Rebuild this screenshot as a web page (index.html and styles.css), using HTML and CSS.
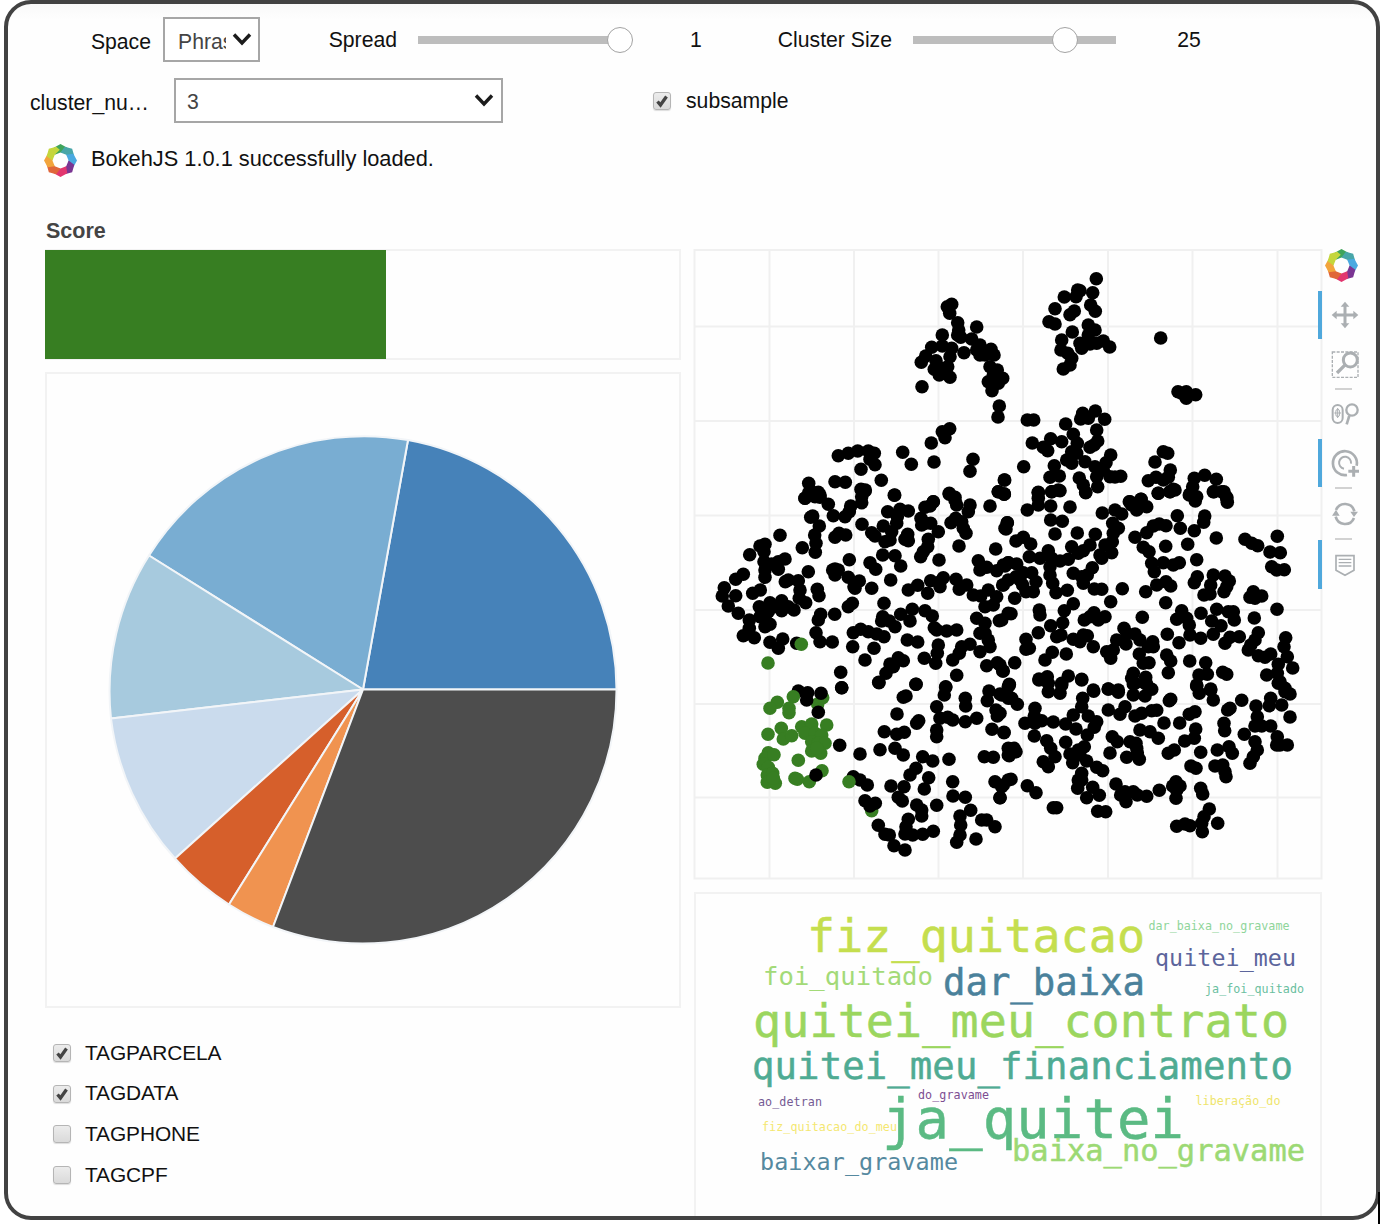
FILE: index.html
```html
<!DOCTYPE html>
<html lang="en">
<head>
<meta charset="utf-8">
<title>Cluster explorer</title>
<link rel="stylesheet" href="styles.css">
</head>
<body>
<svg class="defs" width="0" height="0" aria-hidden="true">
  <defs>
    <symbol id="bokeh" viewBox="-49 -49 98 98">
      <path fill="#3fa45b" d="M-20-38L0-49L20-38L21-24L0-24L-17-17Z"/>
      <path fill="#48a6a8" transform="rotate(45)" d="M-20-38L0-49L20-38L21-24L0-24L-17-17Z"/>
      <path fill="#4aa9e0" transform="rotate(90)" d="M-20-38L0-49L20-38L21-24L0-24L-17-17Z"/>
      <path fill="#7a3592" transform="rotate(135)" d="M-20-38L0-49L20-38L21-24L0-24L-17-17Z"/>
      <path fill="#e2366f" transform="rotate(180)" d="M-20-38L0-49L20-38L21-24L0-24L-17-17Z"/>
      <path fill="#e0663a" transform="rotate(225)" d="M-20-38L0-49L20-38L21-24L0-24L-17-17Z"/>
      <path fill="#f2a43c" transform="rotate(270)" d="M-20-38L0-49L20-38L21-24L0-24L-17-17Z"/>
      <path fill="#c4d63c" transform="rotate(315)" d="M-20-38L0-49L20-38L21-24L0-24L-17-17Z"/>
    </symbol>
    <symbol id="chevron" viewBox="0 0 20 14"><path d="M2 2.500L10 11L18 2.500" fill="none" stroke="#1c1c1c" stroke-width="3.400"/></symbol>
    <symbol id="check" viewBox="0 0 18 18"><path d="M4.500 9.500L7.500 13L13.500 4.500" fill="none" stroke="#444" stroke-width="3.300"/></symbol>
  </defs>
</svg>
<main class="frame">
  <div class="controls">
    <label class="label">Space</label>
    <div class="select small"><span>Phrase</span><svg width="20" height="14"><use href="#chevron"/></svg></div>
    <label class="label wide">Spread</label>
    <div class="slider"><i class="thumb" style="left:202px"></i></div>
    <output>1</output>
    <label class="label wide">Cluster Size</label>
    <div class="slider"><i class="thumb" style="left:152px"></i></div>
    <output class="last">25</output>
  </div>
  <div class="controls second">
    <label class="cluster">cluster_nu…</label>
    <div class="select"><span>3</span><svg width="20" height="14"><use href="#chevron"/></svg></div>
    <label class="option"><span class="box"><svg width="18" height="18"><use href="#check"/></svg></span>subsample</label>
  </div>
  <div class="status"><svg width="33" height="33"><use href="#bokeh"/></svg><span>BokehJS 1.0.1 successfully loaded.</span></div>

  <div class="dashboard">
    <section class="left">
      <h2>Score</h2>
      <div class="score"><div class="fill" style="width:341px"></div></div>
      <div class="pie">
        <svg width="632" height="632" viewBox="47 375 632 632">
          <g stroke="#f2f5f8" stroke-width="2" stroke-linejoin="round">
            <path fill="#4682b9" d="M363 690.500L616.500 690.500A253.500 253.500 0 0 0 408 441Z"/>
            <path fill="#79add2" d="M363 690.500L408 441A253.500 253.500 0 0 0 149 556.500Z"/>
            <path fill="#a7cade" d="M363 690.500L149 556.500A253.500 253.500 0 0 0 111 719.500Z"/>
            <path fill="#cadbed" d="M363 690.500L111 719.500A253.500 253.500 0 0 0 175 859.500Z"/>
            <path fill="#d65f2b" d="M363 690.500L175 859.500A253.500 253.500 0 0 0 229 905.500Z"/>
            <path fill="#f09350" d="M363 690.500L229 905.500A253.500 253.500 0 0 0 273 928Z"/>
            <path fill="#4d4d4d" d="M363 690.500L273 928A253.500 253.500 0 0 0 616.500 690.500Z"/>
          </g>
        </svg>
      </div>
      <div class="tags">
        <label class="option"><span class="box"><svg width="18" height="18"><use href="#check"/></svg></span>TAGPARCELA</label>
        <label class="option"><span class="box"><svg width="18" height="18"><use href="#check"/></svg></span>TAGDATA</label>
        <label class="option"><span class="box"></span>TAGPHONE</label>
        <label class="option"><span class="box"></span>TAGCPF</label>
      </div>
    </section>

    <section class="right">
      <svg class="scatter" width="630" height="632" viewBox="693 249 630 632">
        <path class="grid" d="M769.500 250V878M854 250V878M938.500 250V878M1023 250V878M1108 250V878M1192.500 250V878M1277.500 250V878M695 326.500H1321M695 421H1321M695 515.500H1321M695 610H1321M695 704H1321M695 797.500H1321"/>
        <rect class="grid" x="694.500" y="250" width="627" height="628.500"/>
        <g id="points"></g>
      </svg>
      <div class="cloud">
        <svg width="628" height="324" viewBox="694 892 628 324">
          <text x="807" y="952" textLength="338" font-size="46.700" fill="#c5de4e" stroke="#c5de4e">fiz_quitacao</text>
          <text x="1148.500" y="930" textLength="141" font-size="11.700" fill="#8fd59a">dar_baixa_no_gravame</text>
          <text x="1155" y="966" textLength="141" font-size="23.300" fill="#5c659c">quitei_meu</text>
          <text x="763" y="985" textLength="170" font-size="25.600" fill="#a3da78">foi_quitado</text>
          <text x="943" y="995" textLength="202" font-size="37.300" fill="#4a819b" stroke="#4a819b">dar_baixa</text>
          <text x="1205" y="993" textLength="99" font-size="11.700" fill="#6abf9e">ja_foi_quitado</text>
          <text x="753" y="1037" textLength="536" font-size="46.700" fill="#9bd65e" stroke="#9bd65e">quitei_meu_contrato</text>
          <text x="752" y="1078.500" textLength="541" font-size="37.300" fill="#4fab93" stroke="#4fab93">quitei_meu_financiamento</text>
          <text x="758" y="1106" textLength="64" font-size="11.700" fill="#755b94">ao_detran</text>
          <text x="918" y="1099" textLength="71" font-size="11.700" fill="#7d4e92">do_gravame</text>
          <text x="882" y="1138" textLength="302" font-size="55.500" fill="#5bba83" stroke="#5bba83">ja_quitei</text>
          <text x="1195.500" y="1104.500" textLength="85" font-size="11.700" fill="#efe56c">liberação_do</text>
          <text x="762" y="1130.500" textLength="135" font-size="11.700" fill="#f4e771">fiz_quitacao_do_meu</text>
          <text x="1012" y="1160.500" textLength="293" font-size="30.400" fill="#9cd974" stroke="#9cd974">baixa_no_gravame</text>
          <text x="760" y="1170" textLength="198" font-size="23.400" fill="#55899f">baixar_gravame</text>
        </svg>
      </div>
    </section>

    <nav class="toolbar">
      <svg class="logo" width="33" height="33"><use href="#bokeh"/></svg>
      <button class="on" aria-label="Pan"><svg width="30" height="30" viewBox="-45 -45 90 90">
        <path d="M-30 0H30M0-30V30" stroke-width="9"/><path class="solid" d="M-40 0L-25-13V13ZM40 0L25-13V13ZM0-40L-13-25H13ZM0 40L-13 25H13Z"/></svg></button>
      <button aria-label="Box zoom"><svg width="30" height="30" viewBox="-45 -45 90 90">
        <rect x="-38" y="-36" width="77" height="76" stroke-width="4" stroke-dasharray="9 4"/><path d="M4-2L-25 27" stroke="#fff" stroke-width="21"/><circle cx="16" cy="-12" r="21" fill="#fff" stroke-width="9"/><path d="M1 2L-24 27" stroke-width="10"/></svg></button>
      <hr>
      <button aria-label="Wheel zoom"><svg width="30" height="30" viewBox="-45 -45 90 90">
        <rect x="-37" y="-27" width="30" height="54" rx="15" stroke-width="6"/><ellipse cx="-22" cy="-3" rx="6" ry="12" stroke-width="3"/><path d="M-22-18V12M-32-3H-12" stroke-width="3"/><circle cx="21" cy="-12" r="17" stroke-width="7"/><path d="M13 5L5 31" stroke-width="8"/></svg></button>
      <button class="on" aria-label="Tap"><svg width="30" height="30" viewBox="-45 -45 90 90">
        <path d="M35 8A36 36 0 1 0 6 36" stroke-width="8"/><path d="M18 2A18 18 0 1 0-3 17" stroke-width="6"/><path d="M26 9V41M10 25H42" stroke-width="9"/></svg></button>
      <hr>
      <button aria-label="Reset"><svg width="30" height="30" viewBox="-45 -45 90 90">
        <path d="M-27-12A29 29 0 0 1 28-8M27 12A29 29 0 0 1-28 8" stroke-width="8"/><path class="solid" d="M-39 5L-27-13L-16 5ZM39-7L27 9L16-7Z"/></svg></button>
      <hr>
      <button class="on" aria-label="Hover"><svg width="30" height="30" viewBox="-45 -45 90 90">
        <path d="M-27-28H27V16L0 31L-27 16Z" stroke-width="5"/><path d="M-19-17H19M-19-7H19M-19 3H19" stroke-width="4"/></svg></button>
    </nav>
  </div>
</main>
<i class="edge"></i>
<script src="points.js"></script>
</body>
</html>
```
FILE: styles.css
```css
* { box-sizing: border-box; }
html, body { margin: 0; background: #fff; }
body {
  position: relative;
  width: 1384px;
  height: 1224px;
  overflow: hidden;
  color: #111;
  font: 21.200px/1 "Liberation Sans", Arial, sans-serif;
}
.defs { display: block; }
.edge { position: absolute; right: 4px; bottom: 0; width: 2px; height: 32px; background: #000; }
.frame {
  width: 1376px;
  height: 1220px;
  margin-left: 4px;
  padding-top: 13px;
  border: 4px solid #424242;
  border-radius: 27px;
  overflow: hidden;
  background: linear-gradient(#f9f9f9, #fefefe 16px);
}
.controls {
  display: grid;
  grid-template-columns: 155px 97px 158px 203px 121px 171px 203px 144px;
  height: 45px;
  align-items: center;
}
.label { text-align: right; padding: 4px 12px 0 0; }
.label.wide { padding: 1px 21px 0 0; }
.select {
  display: flex;
  align-items: center;
  justify-content: space-between;
  height: 45px;
  padding: 2px 7px 0 11px;
  border: 2px solid #a6a6a6;
  background: #fff;
  color: #444;
}
.select span { overflow: hidden; padding: 2px 0; }
.select svg { flex: none; margin-top: -3px; }
.select.small { padding: 4px 6px 0 13px; }
.select.small span { width: 48px; }
.select.small svg { margin-top: -5px; }
.slider { position: relative; height: 8px; background: #bdbdbd; margin-top: 1px; }
.slider + output { padding-left: 29px; }
.thumb {
  position: absolute;
  top: -9px;
  width: 26px;
  height: 26px;
  margin-left: -13px;
  border: 1.500px solid #a3a3a3;
  border-radius: 50%;
  background: #fff;
}
output { text-align: center; }
.controls output.last { padding-left: 2px; }
.second { grid-template-columns: 166px 329px 150px; column-gap: 0; margin-top: 16px; }
.cluster { padding: 4px 0 0 22px; }
.second .option { margin: 1px 0 0 150px; }
.option { display: flex; align-items: center; gap: 15px; white-space: nowrap; }
.box {
  width: 18px;
  height: 18px;
  border: 1px solid #b5b5b5;
  border-radius: 3px;
  background: linear-gradient(#ececec, #dadada);
  box-shadow: 0 1px 1px #ddd;
}
.box svg { display: block; margin: -1px; }
.status { display: flex; align-items: center; gap: 14px; height: 36px; margin: 19px 0 0 36px; font-size: 21.800px; }
.status span { margin-top: -3px; }
.dashboard { display: grid; grid-template-columns: 636px 630px 50px; column-gap: 12px; margin: 40px 0 0 37px; }
h2 { height: 31px; margin: 0; padding: 3px 0 0 1px; font-size: 21.500px; line-height: 20px; color: #444; }
.score { height: 111px; border: 2px solid #f2f2f2; border-left: 0; }
.fill { height: 109px; margin-top: -1px; background: #377e22; }
.pie { height: 636px; margin-top: 12px; border: 2px solid #f2f2f2; }
.pie svg { display: block; }
.tags { display: grid; grid-auto-rows: 40.600px; margin: 25px 0 0 8px; font-size: 20.900px; }
.tags .option { gap: 14px; letter-spacing: -0.100px; }
.right { padding-top: 31px; }
.scatter, .cloud svg { display: block; }
.grid { fill: none; stroke: #f0f0f0; stroke-width: 2; }
.dot { fill: #000; }
.dot.hit { fill: #377e22; }
.cloud { height: 340px; margin: 11px 1px 0; border: 2px solid #f2f2f2; }
.cloud svg { margin: -2px; }
.cloud text { font-family: "DejaVu Sans Mono", monospace; stroke-width: 0.500px; }
.toolbar { display: flex; flex-direction: column; padding-top: 31px; margin-left: -17px; }
.logo { margin: 0 0 9px 7px; flex: none; }
.toolbar button {
  display: flex;
  align-items: center;
  flex: none;
  height: 48.400px;
  width: 45px;
  padding: 0 0 0 8px;
  border: 0;
  border-left: 4px solid transparent;
  background: none;
}
.toolbar button.on { border-color: #4fa8dc; }
.toolbar svg { fill: none; stroke: #abafb2; }
.toolbar .logo { stroke: none; }
.toolbar .solid { fill: #abafb2; stroke: none; }
.toolbar hr { width: 17px; height: 2px; margin: 0 0 0.500px 17px; border: 0; background: #d2d2d2; flex: none; }
```
FILE: points.js
```js
// Point lists are grouped by plot region; each pair is in thirds of a pixel from the region origin.
const regions = [
  [690, 680, "hit", "262 67 240 85 297 98 297 85 383 72 398 53 234 163 274 145 280 177 305 167 335 140 365 132 410 135 345 160 375 160 395 165 365 185 385 190 405 190 365 213 392 220 380 205 235 218 225 235 252 224 220 253 235 262 232 285 248 280 232 307 256 310 250 295 325 241 315 295 322 298 358 305 396 272 545 392"],
  [690, 240, "", "779 220 785 193 772 200 803 248 806 270 803 285 812 292 860 261 757 285 845 297 725 322 757 318 785 325 822 338 870 315 870 345 903 328 912 345 860 330 885 345 707 348 694 367 738 362 733 388 780 350 748 405 773 380 780 412 755 385 696 440 900 380 922 390 938 415 895 425 925 430 906 452 910 405 928 498 924 531 779 566 757 575 765 593 724 609 732 666 638 637 664 673 445 647 475 640 503 633 535 633 553 640 540 658 555 674 513 688 435 725 466 727 574 721 513 748 526 750 515 770 614 765 356 730 365 755 345 775 385 757 390 772 849 658 840 694 943 720 925 755 943 762 778 760 795 772"],
  [690, 490, "", "345 25 356 8 375 20 390 15 415 43 430 77 465 80 482 48 478 65 515 38 525 3 515 0 613 16 368 78 362 82 388 108 374 135 378 160 376 187 270 136 337 173 179 194 210 168 225 163 222 185 222 215 225 240 225 262 285 207 265 215 265 238 245 222 355 245 160 253 137 268 103 293 97 318 137 317 115 348 145 370 188 310 211 300 286 275 295 270 325 272 330 300 328 325 347 338 312 360 275 332 240 338 208 350 235 365 275 362 250 350 295 350 225 385 240 403 225 410 210 380 178 390 178 415 160 437 193 443 240 457 265 475 278 447 320 460 382 298 387 317 435 237 445 240 435 255 428 240 478 209 435 142 447 130 467 135 516 103 545 128 555 138 580 108 593 65 630 58 655 63 622 80 620 100 605 125 585 155 600 150 653 133 655 152 645 148 705 52 730 35 720 48 693 85 705 100 695 105 722 100 745 125 715 148 713 170 692 200 700 185 778 13 795 30 800 45 840 45 835 65 797 85 783 98 820 115 828 130 815 95 807 168 900 48 917 177 952 98 945 115 925 5 943 12 578 195 615 197 632 228 540 218 557 238 602 270 545 295 475 262 492 290 508 273 495 295 747 210 582 340 487 340 475 350 434 373 392 373 385 390 378 428 390 455 427 456 488 470 490 428 512 418 535 425 560 432 582 440 525 510 552 475 578 380 575 393 598 393 615 410 632 373 660 393 667 358 705 362 727 378 733 413 740 420 770 423 800 420 655 300 683 286 713 310 722 272 750 290 760 263 750 275 798 268 808 298 830 285 850 315 872 318 895 300 885 350 910 345 920 320 938 285 955 270 865 212 870 240 890 232 920 242 945 228 955 218 860 385 885 400 885 430 895 450 900 470 870 485 870 430 928 392 955 370 652 450 683 456 745 465 742 490 737 520 703 505 625 503 640 512 600 522 610 530 588 550 566 577 788 510 808 490 815 470 840 463 800 556 890 527 922 518 938 543 767 590 678 583 452 547 455 593 730 35"],
  [1000, 240, "", "289 116 278 158 233 150 228 170 240 152 193 171 165 206 147 245 165 252 210 224 223 213 272 195 286 214 265 255 285 270 217 276 185 300 183 330 203 340 215 355 210 375 190 387 240 310 265 285 245 325 270 312 310 303 329 321 290 310 482 294 534 455 559 455 559 475 587 464 545 460 82 540 101 540 197 552 248 520 242 537 265 535 286 513 314 538 290 570 293 603 270 622 282 615 97 609 130 622 143 632 152 596 185 605 220 583 232 610 215 635 200 660 215 670 230 640 255 665 332 645 318 668 285 680 310 690 290 710 330 710 362 709 345 711 293 740 163 677 150 712 178 708 238 714 250 735 257 757 71 680 115 757 155 755 175 750 14 720 12 763 490 635 503 640 465 666 511 690 505 712 445 722 468 712 490 720 475 760 510 755 520 748 583 715 578 740 568 765 590 770 614 706 649 718 642 755 672 755 680 775 388 785 423 778"],
  [1000, 490, "", "82 60 115 45 115 8 115 25 152 48 155 5 180 2 257 8 210 51 152 90 187 94 165 132 232 129 307 69 345 60 365 72 390 35 423 28 410 60 440 50 395 45 338 100 355 115 340 130 337 155 286 133 315 165 335 188 305 205 300 195 270 165 250 182 215 170 235 190 475 10 510 5 525 0 570 12 586 33 640 5 665 5 680 22 682 37 532 77 541 115 583 122 614 78 611 97 649 144 405 142 440 128 460 108 478 102 498 107 430 172 447 185 497 169 563 163 590 209 455 220 463 245 490 218 520 225 538 218 22 98 18 117 48 153 70 142 92 162 88 200 120 205 145 182 155 205 180 213 205 208 150 230 25 218 50 222 10 225 48 260 70 248 95 248 108 275 100 305 78 305 68 285 60 270 150 255 158 280 168 308 202 301 220 250 245 260 277 233 250 280 262 255 283 297 305 298 367 296 332 335 437 305 470 285 498 275 512 288 497 338 592 260 583 278 640 255 632 285 612 315 630 312 675 258 688 273 672 305 680 290 735 148 755 160 773 167 832 139 810 186 841 188 815 230 830 240 853 239 760 305 750 322 785 318 765 325 831 358 763 384 10 285 44 325 33 371 5 390 118 360 120 375 220 341 193 362 188 398 152 407 115 428 78 448 88 475 78 478 170 440 183 435 220 448 250 435 240 455 262 437 280 470 253 390 282 368 295 390 315 380 270 380 427 382 372 415 380 430 405 432 350 450 378 462 420 450 458 455 445 470 460 470 320 485 340 480 332 505 502 433 537 458 570 435 602 445 545 362 530 388 560 385 568 405 603 370 650 358 635 393 685 365 700 365 703 390 663 407 640 433 675 460 690 442 718 440 775 428 765 450 745 480 752 465 775 497 795 502 812 492 857 443 852 470 862 500 878 534 835 523 832 550 840 575 855 595 800 555 157 487 135 510 199 492 44 518 10 543 0 525 28 583 117 567 142 560 145 580 205 558 185 580 245 568 500 495 512 513 505 548 418 492 430 520 447 518 400 550 395 565 437 562 405 580 435 580 569 513 617 518 597 555 622 553 668 547 680 553 590 585 632 597 325 597 355 600 280 600"],
  [690, 680, "", "325 33 353 38 350 60 393 40 385 97 378 285 455 23 449 196 510 222 490 290 510 300 532 315 525 362 540 378 556 370 565 436 585 463 598 465 612 497 645 510 567 8 678 13 640 52 648 48 621 102 583 155 620 163 643 157 680 130 686 122 767 22 763 45 740 80 750 115 773 112 788 120 740 150 740 170 826 55 827 78 826 125 860 115 570 209 615 205 640 225 698 230 728 243 777 238 678 265 660 285 716 293 703 327 603 318 642 320 625 352 637 363 788 305 789 348 826 352 740 376 680 375 695 390 695 408 655 418 648 440 645 462 668 465 698 463 730 454 842 391 810 408 812 435 810 465 800 487 858 477 875 420 890 420 915 440 897 33 892 62 930 42 955 20 955 55 918 90 922 108 906 148 942 158 955 205 955 225 883 230 910 232 915 305 935 320 930 353 955 300"],
  [1000, 680, "", "28 15 5 45 35 55 52 73 0 100 12 157 117 0 145 35 180 40 185 15 245 0 281 34 325 27 355 37 400 12 400 45 440 12 455 28 435 48 248 55 245 80 265 108 220 105 105 85 103 108 75 130 105 130 125 122 103 168 160 126 197 132 228 147 290 125 283 142 262 165 325 90 375 80 360 103 405 108 425 100 455 92 470 91 508 62 512 58 590 18 598 40 632 30 640 60 725 61 683 90 690 85 768 78 772 110 765 138 812 138 785 138 733 163 812 55 808 77 845 75 855 35 870 42 835 10 870 111 492 129 539 129 568 103 585 95 587 147 583 175 554 183 672 130 674 152 420 150 450 155 475 175 337 170 352 185 390 185 408 190 410 205 380 232 412 218 418 238 330 219 197 187 140 182 152 205 165 230 130 245 145 260 30 210 48 215 28 227 42 205 210 222 235 210 253 200 218 248 260 243 240 225 290 262 308 272 245 280 235 300 233 325 245 300 278 322 260 353 298 346 33 298 10 315 0 353 82 317 108 338 160 383 170 383 293 394 317 395 348 312 375 335 362 345 400 335 378 365 412 345 440 349 478 331 505 220 523 210 602 217 573 258 588 265 652 210 687 200 697 220 645 258 668 255 675 275 678 290 765 185 772 210 760 230 750 250 832 170 840 195 862 195 830 195 528 305 530 330 540 318 528 355 518 318 602 325 608 342 628 387 612 410 605 430 607 455 570 437 555 432 530 439 653 430"],
  [690, 490, "hit", "234 519 334 463"],
  [690, 680, "hit", "310 50 477 305"]
];
const layer = document.getElementById("points");
for (const [ox, oy, kind, list] of regions) {
  const n = list.split(" ").map(Number);
  for (let i = 0; i < n.length; i += 2) {
    const c = document.createElementNS("http://www.w3.org/2000/svg", "circle");
    c.setAttribute("class", kind ? "dot " + kind : "dot");
    c.setAttribute("cx", (ox + n[i] / 3).toFixed(1));
    c.setAttribute("cy", (oy + n[i + 1] / 3).toFixed(1));
    c.setAttribute("r", 6.8);
    layer.append(c);
  }
}
```
